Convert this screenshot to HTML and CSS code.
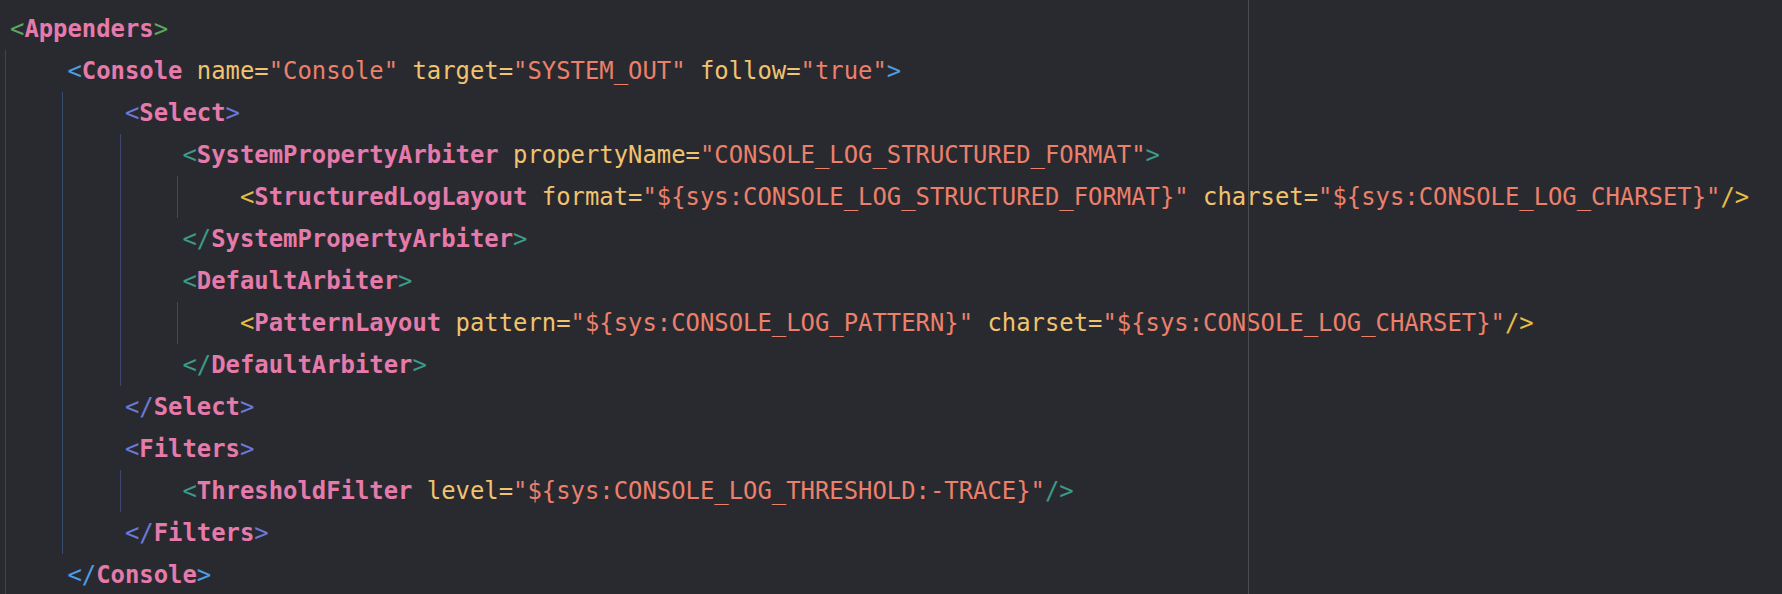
FILE: index.html
```html
<!DOCTYPE html>
<html>
<head>
<meta charset="utf-8">
<link rel="stylesheet" href="styles.css">
</head>
<body>
<div class="editor">
  <div class="margin-line"></div>
  <div class="code">
    <div class="ln"><span class="b0">&lt;/</span><span class="t">Properties</span><span class="b0">&gt;</span></div>
    <div class="ln"><span class="b0">&lt;</span><span class="t">Appenders</span><span class="b0">&gt;</span></div>
    <div class="blk g0">
      <div class="ln"><span class="b1">&lt;</span><span class="t">Console</span> <span class="a">name=</span><span class="v">"Console"</span> <span class="a">target=</span><span class="v">"SYSTEM_OUT"</span> <span class="a">follow=</span><span class="v">"true"</span><span class="b1">&gt;</span></div>
      <div class="blk g1">
        <div class="ln"><span class="b2">&lt;</span><span class="t">Select</span><span class="b2">&gt;</span></div>
        <div class="blk g2">
          <div class="ln"><span class="b3">&lt;</span><span class="t">SystemPropertyArbiter</span> <span class="a">propertyName=</span><span class="v">"CONSOLE_LOG_STRUCTURED_FORMAT"</span><span class="b3">&gt;</span></div>
          <div class="blk g3">
            <div class="ln"><span class="b4">&lt;</span><span class="t">StructuredLogLayout</span> <span class="a">format=</span><span class="v">"${sys:CONSOLE_LOG_STRUCTURED_FORMAT}"</span> <span class="a">charset=</span><span class="v">"${sys:CONSOLE_LOG_CHARSET}"</span><span class="b4">/&gt;</span></div>
          </div>
          <div class="ln"><span class="b3">&lt;/</span><span class="t">SystemPropertyArbiter</span><span class="b3">&gt;</span></div>
          <div class="ln"><span class="b3">&lt;</span><span class="t">DefaultArbiter</span><span class="b3">&gt;</span></div>
          <div class="blk g3">
            <div class="ln"><span class="b4">&lt;</span><span class="t">PatternLayout</span> <span class="a">pattern=</span><span class="v">"${sys:CONSOLE_LOG_PATTERN}"</span> <span class="a">charset=</span><span class="v">"${sys:CONSOLE_LOG_CHARSET}"</span><span class="b4">/&gt;</span></div>
          </div>
          <div class="ln"><span class="b3">&lt;/</span><span class="t">DefaultArbiter</span><span class="b3">&gt;</span></div>
        </div>
        <div class="ln"><span class="b2">&lt;/</span><span class="t">Select</span><span class="b2">&gt;</span></div>
        <div class="ln"><span class="b2">&lt;</span><span class="t">Filters</span><span class="b2">&gt;</span></div>
        <div class="blk g2">
          <div class="ln"><span class="b3">&lt;</span><span class="t">ThresholdFilter</span> <span class="a">level=</span><span class="v">"${sys:CONSOLE_LOG_THRESHOLD:-TRACE}"</span><span class="b3">/&gt;</span></div>
        </div>
        <div class="ln"><span class="b2">&lt;/</span><span class="t">Filters</span><span class="b2">&gt;</span></div>
      </div>
      <div class="ln"><span class="b1">&lt;/</span><span class="t">Console</span><span class="b1">&gt;</span></div>
    </div>
    <div class="ln"><span class="b0">&lt;/</span><span class="t">Appenders</span><span class="b0">&gt;</span></div>
  </div>
</div>
</body>
</html>
```

FILE: styles.css
```css
html, body {
  margin: 0;
  padding: 0;
  background: #292a30;
  overflow: hidden;
}

.editor {
  position: relative;
  width: 1782px;
  height: 594px;
  overflow: hidden;
  background: #292a30;
}

.margin-line {
  position: absolute;
  left: 1248px;
  top: 0;
  width: 1px;
  height: 100%;
  background: #4b4c52;
}

.code {
  margin-top: -34px;
  padding-left: 10px;
  font-family: "DejaVu Sans Mono", "Liberation Mono", monospace;
  font-size: 23.88px;
  line-height: 42px;
  color: #e57bab;
}

.ln {
  height: 42px;
  white-space: pre;
}

.blk {
  margin-left: -5px;
  border-left: 1px solid #394c3c;
  padding-left: calc(4ch + 4px);
}

.g0 { border-left-color: #394c3c; }
.g1 { border-left-color: #384c72; }
.g2 { border-left-color: #424570; }
.g3 { border-left-color: #2e5650; }

.t { color: #e57bab; font-weight: bold; }
.a { color: #f1c36f; }
.v { color: #ec806b; }

.b0 { color: #5fa65f; }
.b1 { color: #4d9de0; }
.b2 { color: #6b79d6; }
.b3 { color: #3b9a88; }
.b4 { color: #e3bd45; }
```
